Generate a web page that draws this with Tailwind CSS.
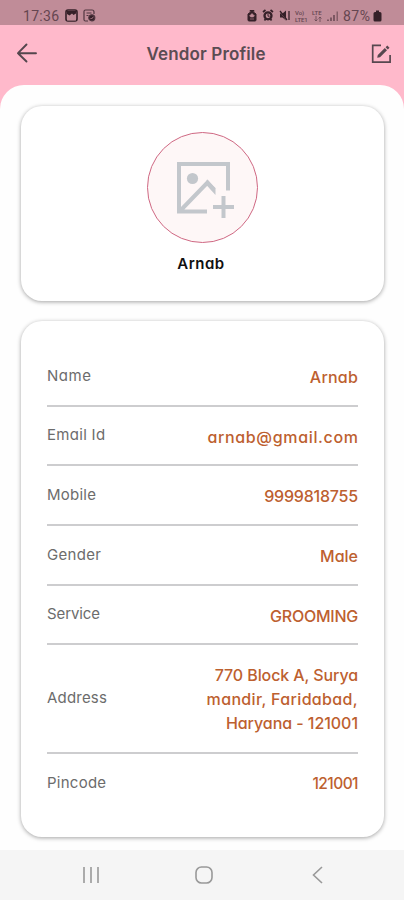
<!DOCTYPE html>
<html lang="en">
<head>
<meta charset="utf-8">
<title>Vendor Profile</title>
<script src="https://cdn.jsdelivr.net/npm/@tailwindcss/browser@4"></script>
</head>
<body class="bg-[#ffb9cb] font-[Inter,sans-serif] [font-feature-settings:'cv11']">
<div class="flex h-[900px] w-[404px] flex-col overflow-hidden">
  <header class="flex h-[25px] shrink-0 items-start bg-[#c08c98] pt-[6px] pl-[23px] font-[Roboto,sans-serif] text-[#654650]">
    <span class="w-[37px] text-[14px] leading-[20px] tracking-[0.3px] whitespace-nowrap">17:36</span>
    <svg class="mt-[3px] ml-[5px]" width="13" height="13" viewBox="0 0 13 13"><rect x="1" y="1" width="11" height="11" rx="2" fill="none" stroke="#352028" stroke-width="1.6"/><path d="M2 2h9v2.500L8.500 6 7 4.500 4.500 6.500 2 5z" fill="#352028"/><path d="M2 10l2-1 2 .5 3-3 2 2v3H2z" fill="#c08c98"/></svg>
    <svg class="mt-[3px] ml-[5px]" width="13" height="13" viewBox="0 0 13 13" fill="none" stroke="#503640" stroke-width="1.200"><path d="M5 12H2.500Q1 12 1 10.500v-8Q1 1 2.500 1H9q2 0 2 2v2M3.500 4h5M3.500 6.500h2"/><circle cx="8.800" cy="8.800" r="3" fill="#352028"/><path d="M7.500 9l1 1 2-2.300" stroke="#c08c98" stroke-width=".8"/></svg>
    <svg class="mt-[3px] ml-[151px]" width="10" height="13" viewBox="0 0 10 13"><path d="M3 2.500V1.500h4v1M1 5l4-3 4 3v6q0 1-1 1H2q-1 0-1-1z" fill="#352028" stroke="#352028"/><path d="M5 4.500 7.500 7H6.500v1h-3V7h-1zM3 10h4" fill="#c08c98" stroke="#c08c98" stroke-width=".6"/></svg>
    <svg class="mt-[3px] ml-[5px]" width="12" height="13" viewBox="0 0 12 13"><path d="M1 3 3.500 1M11 3 8.500 1M2.500 11.500l1-1.500M9.500 11.500 8.500 10" stroke="#352028" stroke-width="1.700"/><circle cx="6" cy="6.800" r="3.500" fill="#c08c98" stroke="#352028" stroke-width="2.300"/><path d="M6 4.800v2.400h1.600" fill="none" stroke="#352028"/></svg>
    <svg class="mt-[3px] ml-[5px]" width="12" height="13" viewBox="0 0 12 13"><path d="M1 4.500h2.500L7 1.500v10L3.500 8.500H1z" fill="#352028"/><path d="M0 1l8 11" stroke="#c08c98"/><path d="M1 2l7 9M10 2v9" stroke="#352028" stroke-width="1.300"/></svg>
    <div class="mt-[3px] ml-[4px] w-[14px] text-[6px] leading-[7px] font-medium tracking-[-0.1px] whitespace-nowrap"><span class="block">Vo)</span><span class="block">LTE1</span></div>
    <div class="mt-[3px] ml-[3px] w-[12px] text-[6px] leading-[7px] font-medium whitespace-nowrap">
      <span class="block">LTE</span>
      <svg class="ml-[2px]" width="8" height="6" viewBox="0 0 8 6" fill="none" stroke="#654650" stroke-width=".8"><path d="M2 0v5M.5 3.500 2 5l1.500-1.500M6 6V1M4.500 2.500 6 1l1.500 1.500"/></svg>
    </div>
    <svg class="mt-[4px] ml-[3px]" width="12" height="12" viewBox="0 0 12 12" stroke="#654650" stroke-width="1.500"><path d="M1 11V9.500M4 11V7.500M7 11V5"/><path d="M10.200 11V1.500" stroke-width="1.200" opacity=".8"/></svg>
    <span class="ml-[4px] w-[30px] text-[14px] leading-[20px] tracking-[0.5px] whitespace-nowrap">87%</span>
    <svg class="mt-[4px]" width="9" height="12" viewBox="0 0 9 12"><path d="M3 .5h3V2h1q1.500 0 1.500 1.500V10q0 1.500-1.500 1.500H2Q.5 11.500.5 10V3.500Q.5 2 2 2h1z" fill="#352028"/></svg>
  </header>

  <div class="flex h-[60px] shrink-0 items-start justify-between pr-[12px] pl-[16px]">
    <svg class="mt-[18px]" width="22" height="20" viewBox="0 0 22 20" fill="none" stroke="#54464d" stroke-width="1.900" stroke-linecap="round" stroke-linejoin="round"><path d="M10.500 1.500 2 10.200l8.500 8.300M2 10.200h18"/></svg>
    <h1 class="mt-[17px] ml-[3px] w-[119px] text-[17px] leading-[24px] font-semibold tracking-[0.14px] whitespace-nowrap text-[#5b4c53]">Vendor Profile</h1>
    <svg class="mt-[19px]" width="21" height="20" viewBox="0 0 21 20" fill="none" stroke="#57474f" stroke-width="1.700"><path d="M10 1.300H1.700v16.900h17.400V11"/><path d="M6.200 13.800l.6-2.800 7-7 2.200 2.200-7 7z" fill="#57474f" stroke="none"/><path d="M14.600 3.200 16.300 1.500l2.200 2.200-1.700 1.700z" fill="#57474f" stroke="none"/></svg>
  </div>

  <main class="flex min-h-0 flex-1 flex-col gap-[20px] rounded-t-[24px] bg-[#fefefe] pt-[21px] pr-[20px] pl-[21px]">
    <section class="flex h-[195px] shrink-0 flex-col items-center rounded-[21px] bg-white pt-[26px] shadow-[0_1px_4px_rgba(0,0,0,0.36)]">
      <div class="flex h-[111px] w-[111px] items-center justify-center rounded-full border border-[#cf6883] bg-[#fef7f7]">
        <svg class="mt-[5px] ml-[7px]" width="60" height="58" viewBox="0 0 60 58" fill="none" stroke="#c3c7cc" stroke-width="4"><path d="M31 50.500H3V3h49v26.500M4 50 31.500 21.500 38 29"/><path d="M31 18.500 39.500 27v7L29.500 23z" fill="#c3c7cc" stroke="none"/><circle cx="16.500" cy="17.500" r="5.600" fill="#c3c7cc" stroke="none"/><path d="M47.500 35v22M37 46h21"/></svg>
      </div>
      <p class="mt-[9px] mr-[3px] text-[15px] leading-[24px] font-semibold tracking-[0.5px] text-[#111]">Arnab</p>
    </section>

    <section class="h-[516px] shrink-0 rounded-[21px] bg-white px-[26px] pt-[26px] text-[15px] text-[#6c6c6c] shadow-[0_1px_4px_rgba(0,0,0,0.36)]">
      <dl>
        <div class="flex h-[60px] items-center justify-between border-b-2 border-[#cdcdcf]"><dt class="tracking-[0.55px]">Name</dt><dd class="pt-[2px] text-[16px] font-medium tracking-[0.2px] text-[#bd602f]">Arnab</dd></div>
        <div class="flex h-[59px] items-center justify-between border-b-2 border-[#cdcdcf]"><dt class="tracking-[0.3px]">Email Id</dt><dd class="mr-[-0.650px] pt-[2px] text-[16px] font-medium tracking-[0.65px] text-[#bd602f]">arnab@gmail.com</dd></div>
        <div class="flex h-[60px] items-center justify-between border-b-2 border-[#cdcdcf]"><dt class="tracking-[0.25px]">Mobile</dt><dd class="pt-[2px] text-[16px] font-medium tracking-[-0.2px] text-[#bd602f]">9999818755</dd></div>
        <div class="flex h-[60px] items-center justify-between border-b-2 border-[#cdcdcf]"><dt class="tracking-[0.3px]">Gender</dt><dd class="pt-[2px] text-[16px] font-medium text-[#bd602f]">Male</dd></div>
        <div class="flex h-[59px] items-center justify-between border-b-2 border-[#cdcdcf]"><dt class="tracking-[-0.1px]">Service</dt><dd class="pt-[2px] text-[16px] font-medium tracking-[-0.25px] text-[#bd602f]">GROOMING</dd></div>
        <div class="flex h-[109px] items-center justify-between border-b-2 border-[#cdcdcf]"><dt class="tracking-[0.2px]">Address</dt><dd class="pt-px text-right text-[16px] leading-[24px] font-medium whitespace-nowrap text-[#bd602f]"><span class="block tracking-[-0.1px]">770 Block A, Surya</span><span class="block tracking-[0.34px]">mandir, Faridabad,</span><span class="block tracking-[-0.05px]">Haryana - 121001</span></dd></div>
        <div class="flex h-[58px] items-center justify-between"><dt class="tracking-[0.25px]">Pincode</dt><dd class="pt-px text-[15.5px] font-medium tracking-[-0.550px] text-[#bd602f]">121001</dd></div>
      </dl>
    </section>
  </main>

  <nav class="flex h-[50px] shrink-0 items-center bg-[#f5f5f5] text-[#999]">
    <svg class="ml-[82px]" width="18" height="18" viewBox="0 0 18 18" stroke="currentColor" stroke-width="1.600"><path d="M2 1v16M9 1v16M16 1v16"/></svg>
    <svg class="ml-[94px]" width="20" height="20" viewBox="0 0 20 20" fill="none" stroke="currentColor" stroke-width="1.600"><rect x="2" y="2" width="16" height="16" rx="5.500"/></svg>
    <svg class="ml-[97px]" width="14" height="18" viewBox="0 0 14 18" fill="none" stroke="currentColor" stroke-width="1.600"><path d="M11 1 2.500 9l8.500 8"/></svg>
  </nav>
</div>
</body>
</html>
